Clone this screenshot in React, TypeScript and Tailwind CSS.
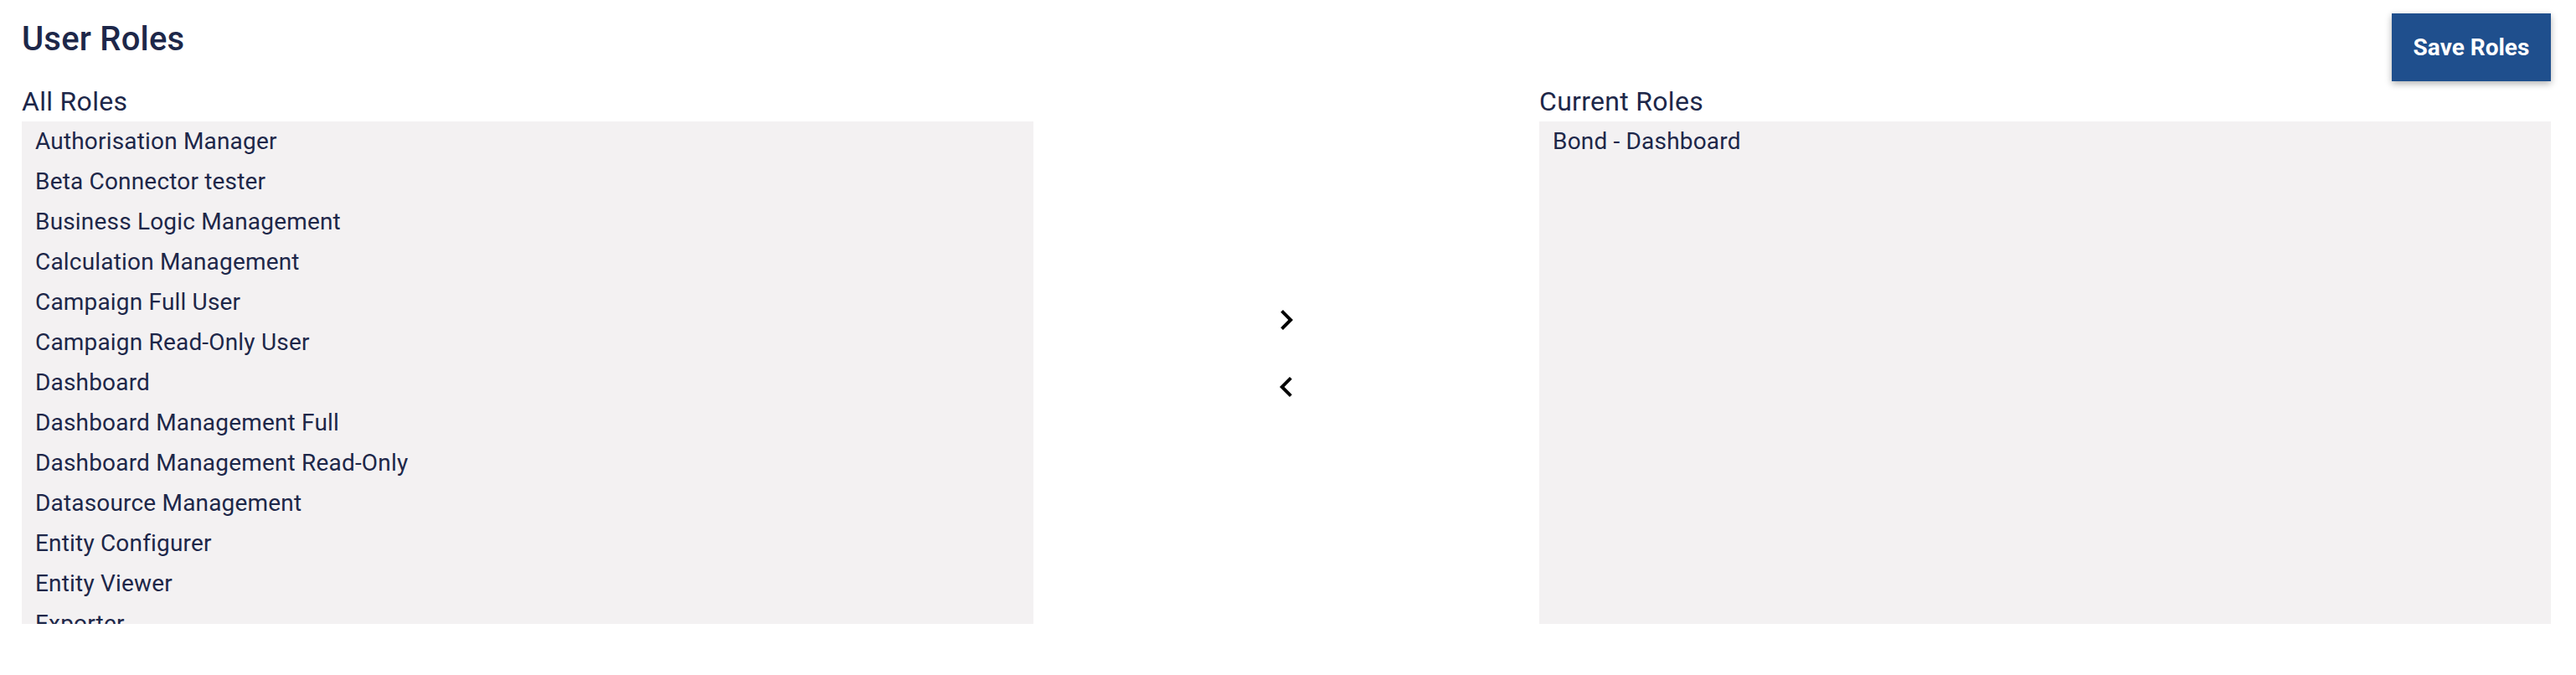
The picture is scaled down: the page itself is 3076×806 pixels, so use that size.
const allRoles = [
  'Authorisation Manager',
  'Beta Connector tester',
  'Business Logic Management',
  'Calculation Management',
  'Campaign Full User',
  'Campaign Read-Only User',
  'Dashboard',
  'Dashboard Management Full',
  'Dashboard Management Read-Only',
  'Datasource Management',
  'Entity Configurer',
  'Entity Viewer',
  'Exporter',
  'Importer',
  'Report Viewer',
];

const currentRoles = ['Bond - Dashboard'];

const RoleList = ({ title, roles }: { title: string; roles: string[] }) => (
  <div className="flex flex-col">
    <h2 className="text-[32px] leading-[44px] font-normal tracking-[0.3px] mb-[2px]">{title}</h2>
    <ul className="h-[600px] overflow-hidden bg-[#f3f1f2]">
      {roles.map((role) => (
        <li
          key={role}
          className="h-[48px] px-[16px] flex items-center text-[28px] tracking-[0.18px] cursor-pointer"
        >
          {role}
        </li>
      ))}
    </ul>
  </div>
);

export default function App() {
  return (
    <div
      className="w-full min-h-[806px] bg-white pl-[26px] pr-[30px] text-[#1d2749]"
      style={{ fontFamily: 'Roboto, "Liberation Sans", sans-serif' }}
    >
      {/* Header */}
      <div className="flex items-start justify-between">
        <h1 className="mt-[23px] text-[40px] leading-[48px] font-medium tracking-[0.2px]">User Roles</h1>
        <button className="mt-[16px] h-[81px] w-[190px] bg-[#1f4f8d] text-white text-[28px] font-bold shadow-[0_3px_8px_rgba(0,0,0,0.3)]">
          Save Roles
        </button>
      </div>

      {/* Role pickers */}
      <div className="mt-[2px] grid grid-cols-[1208px_1fr_1208px]">
        <RoleList title="All Roles" roles={allRoles} />
        <div className="flex flex-col items-center justify-center">
          <button className="w-[80px] h-[80px] flex items-center justify-center text-black">
            <svg width="48" height="48" viewBox="0 0 24 24" fill="currentColor">
              <path d="M10 6L8.59 7.41 13.17 12l-4.58 4.59L10 18l6-6z" />
            </svg>
          </button>
          <button className="w-[80px] h-[80px] flex items-center justify-center text-black">
            <svg width="48" height="48" viewBox="0 0 24 24" fill="currentColor">
              <path d="M15.41 7.41L14 6l-6 6 6 6 1.41-1.41L10.83 12z" />
            </svg>
          </button>
        </div>
        <RoleList title="Current Roles" roles={currentRoles} />
      </div>
    </div>
  );
}
